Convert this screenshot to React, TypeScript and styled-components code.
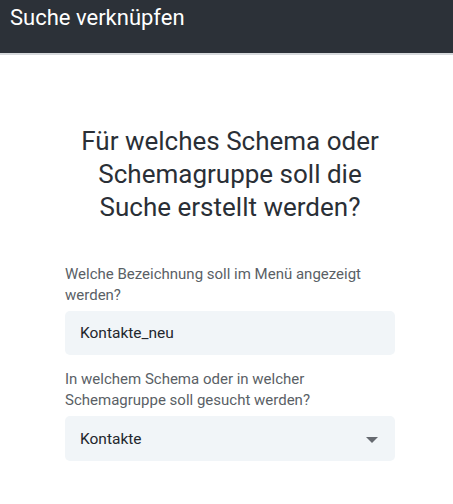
import React from "react";
import styled, { createGlobalStyle } from "styled-components";

const Global = createGlobalStyle`
  html, body { margin: 0; padding: 0; background: #ffffff; }
  body { font-family: Roboto, "Noto Sans", Arial, sans-serif; }
  * { box-sizing: border-box; }
`;

const Header = styled.header`
  height: 55px;
  background: #2c3138;
  border-bottom: 2px solid #d6d9dc;
  display: flex;
  align-items: flex-start;
  padding: 4px 10px 0;
`;

const HeaderTitle = styled.h1`
  margin: 0;
  font-size: 22px;
  font-weight: 400;
  color: #ffffff;
  line-height: 28px;
`;

const Content = styled.main`
  width: 330px;
  margin: 0 0 0 65px;
  padding-top: 70px;
  display: flex;
  flex-direction: column;
`;

const Title = styled.h2`
  margin: 0 0 40px;
  font-size: 26px;
  font-weight: 400;
  line-height: 33px;
  color: #2a2f36;
  text-align: center;
  padding: 0 8px;
`;

const Field = styled.div`
  display: flex;
  flex-direction: column;
  margin-bottom: 14px;
`;

const Label = styled.label`
  font-size: 15px;
  line-height: 21px;
  color: #5a5f66;
  margin-bottom: 5px;
`;

const Box = styled.div<{ $h: number }>`
  height: ${(p) => p.$h}px;
  background: #f1f5f8;
  border-radius: 5px;
  display: flex;
  align-items: center;
  justify-content: space-between;
  padding: 0 17px 0 15px;
  font-size: 15.5px;
  color: #23272d;
`;

const Arrow = styled.span`
  width: 0;
  height: 0;
  border-left: 6px solid transparent;
  border-right: 6px solid transparent;
  border-top: 6px solid #666a70;
  margin-top: 2px;
`;

export default function App() {
  return (
    <>
      <Global />
      <Header>
        <HeaderTitle>Suche verknüpfen</HeaderTitle>
      </Header>
      <Content>
        <Title>Für welches Schema oder Schemagruppe soll die Suche erstellt werden?</Title>
        <Field>
          <Label>Welche Bezeichnung soll im Menü angezeigt werden?</Label>
          <Box $h={44}>Kontakte_neu</Box>
        </Field>
        <Field>
          <Label>In welchem Schema oder in welcher Schemagruppe soll gesucht werden?</Label>
          <Box $h={45}>
            Kontakte
            <Arrow />
          </Box>
        </Field>
      </Content>
    </>
  );
}
